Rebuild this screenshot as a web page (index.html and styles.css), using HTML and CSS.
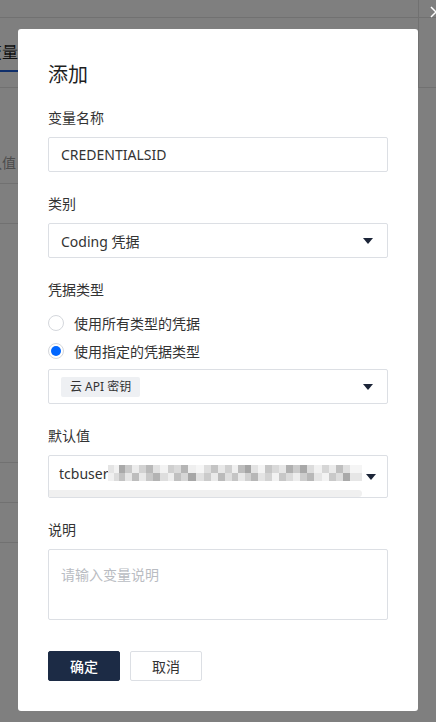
FILE: index.html
```html
<!DOCTYPE html>
<html lang="zh-CN">
<head>
    <meta charset="UTF-8">
    <meta name="viewport" content="width=device-width, initial-scale=1.0">
    <title>添加变量</title>
    <link rel="stylesheet" href="styles.css">
</head>
<body>
    <!-- page behind the mask -->
    <div class="page">
        <div class="page-head">
            <div class="main-head">
                <div class="top-bar"></div>
                <div class="tabs"><span class="tab active">变量</span></div>
            </div>
            <div class="side-head">
                <div class="top-bar"></div>
            </div>
        </div>
        <div class="table">
            <div class="toolbar"></div>
            <div class="row row-head"><span class="col-name">默认值</span></div>
            <div class="row"></div>
            <div class="row row-tall"></div>
            <div class="row"></div>
            <div class="row"></div>
        </div>
    </div>

    <div class="mask"></div>
    <span class="drawer-close">
        <svg width="12" height="12" viewBox="0 0 12 12"><path d="M1 1L11 11M11 1L1 11" stroke="#fff" stroke-width="1.5" fill="none"/></svg>
    </span>

    <div class="dialog-layer">
        <div class="dialog">
            <h2 class="dialog-title">添加</h2>

            <div class="field">
                <div class="field-label">变量名称</div>
                <input class="input" type="text" value="CREDENTIALSID">
            </div>

            <div class="field">
                <div class="field-label">类别</div>
                <div class="input select">
                    <span class="select-value">Coding 凭据</span>
                    <span class="caret"></span>
                </div>
            </div>

            <div class="field">
                <div class="field-label">凭据类型</div>
                <div class="radio-group">
                    <label class="radio"><span class="radio-dot"></span>使用所有类型的凭据</label>
                    <label class="radio checked"><span class="radio-dot"></span>使用指定的凭据类型</label>
                </div>
                <div class="input select select-tags">
                    <span class="tag">云 API 密钥</span>
                    <span class="caret"></span>
                </div>
            </div>

            <div class="field">
                <div class="field-label">默认值</div>
                <div class="input select select-scroll">
                    <div class="scroll-area">
                        <div class="scroll-text">tcbuser<span class="mosaic"></span></div>
                        <div class="scroll-track"></div>
                    </div>
                    <span class="caret-box"><span class="caret"></span></span>
                </div>
            </div>

            <div class="field">
                <div class="field-label">说明</div>
                <textarea class="textarea" placeholder="请输入变量说明"></textarea>
            </div>

            <div class="dialog-footer">
                <button class="btn btn-primary">确定</button>
                <button class="btn">取消</button>
            </div>
        </div>
    </div>
</body>
</html>
```

FILE: styles.css
```css
* {
    box-sizing: border-box;
}
body {
    margin: 0;
    height: 722px;
    overflow: hidden;
    font-family: "Noto Sans", "Noto Sans CJK SC", sans-serif;
    font-size: 14px;
    color: #333;
    background: #fff;
}

/* background page */
.page-head {
    display: flex;
    height: 88px;
    border-bottom: 1px solid #e2e2e2;
}
.main-head {
    width: 419px;
    border-right: 1px solid #e2e2e2;
}
.side-head {
    flex: 1;
}
.top-bar {
    height: 18px;
    border-bottom: 1px solid #e2e2e2;
}
.tabs {
    display: flex;
    padding-top: 22px;
}
.tab {
    margin-left: -14px;
    width: 60px;
    font-size: 16px;
    line-height: 24px;
    padding-bottom: 6px;
    color: #1f1f1f;
}
.tab.active {
    border-bottom: 2px solid #1e5ed6;
}
.table {
    width: 418px;
}
.toolbar {
    height: 52px;
}
.row {
    height: 40px;
    border-bottom: 1px solid #e2e2e2;
    display: flex;
    align-items: center;
}
.row-head {
    height: 44px;
}
.row-tall {
    height: 239px;
}
.col-name {
    margin-left: -26px;
    color: #999;
}

.mask {
    position: fixed;
    inset: 0;
    background: rgba(0, 0, 0, 0.5);
}
.drawer-close {
    position: fixed;
    top: 6px;
    right: -6px;
    display: flex;
}

/* dialog */
.dialog-layer {
    position: fixed;
    inset: 0;
    display: flex;
    justify-content: center;
    align-items: flex-start;
    padding-top: 29px;
}
.dialog {
    width: 400px;
    background: #fff;
    border-radius: 3px;
    padding: 32px 30px 30px;
}
.dialog-title {
    margin: 0 0 18px;
    font-size: 20px;
    line-height: 28px;
    font-weight: 400;
    color: #1f1f1f;
}
.field {
    margin-bottom: 21px;
}
.field:last-of-type {
    margin-bottom: 0;
}
.field-label {
    line-height: 22px;
    margin-bottom: 8px;
    color: #333;
}
.input {
    display: flex;
    align-items: center;
    width: 100%;
    height: 35px;
    padding: 0 12px;
    border: 1px solid #dcdfe4;
    border-radius: 2px;
    background: #fff;
    font: inherit;
    color: #333;
    outline: none;
}
.select {
    justify-content: space-between;
    padding-right: 14px;
}
.caret {
    width: 0;
    height: 0;
    border-left: 5px solid transparent;
    border-right: 5px solid transparent;
    border-top: 6px solid #1c2538;
}
.select-tags {
    margin-top: 4px;
}
.tag {
    height: 20px;
    line-height: 20px;
    padding: 0 9px;
    font-size: 12px;
    background: #eef0f3;
    border-radius: 2px;
    color: #333;
}

.radio-group {
    display: flex;
    flex-direction: column;
}
.radio {
    display: flex;
    align-items: center;
    gap: 10px;
    height: 28px;
    color: #333;
}
.radio-dot {
    width: 16px;
    height: 16px;
    border: 1px solid #d4d7dc;
    border-radius: 50%;
    display: flex;
    align-items: center;
    justify-content: center;
}
.radio.checked .radio-dot::after {
    content: "";
    width: 10px;
    height: 10px;
    border-radius: 50%;
    background: #0066ff;
}

.select-scroll {
    height: 43px;
    padding: 0;
    align-items: stretch;
    overflow: hidden;
}
.scroll-area {
    flex: 1;
    min-width: 0;
    display: flex;
    flex-direction: column;
}
.scroll-text {
    height: 34px;
    display: flex;
    align-items: center;
    padding-left: 10px;
    white-space: nowrap;
    overflow: hidden;
}
.mosaic {
    flex: none;
    width: 260px;
    height: 16px;
    background:
        linear-gradient(90deg, #e4e4e4 0 6px, #f2f2f2 6px 11px, #a9a9a9 11px 17px, #c9c9c9 17px 24px, #ececec 24px 31px, #d2d2d2 31px 38px, #b9b9b9 38px 45px, #e2e2e2 45px 52px, #f3f3f3 52px 60px, #cfcfcf 60px 66px, #dadada 66px 73px, #b5b5b5 73px 80px, #efefef 80px 88px, #f6f6f6 88px 96px, #dedede 96px 103px, #c4c4c4 103px 110px, #e8e8e8 110px 117px, #d0d0d0 117px 124px, #f0f0f0 124px 130px, #bdbdbd 130px 137px, #a5a5a5 137px 143px, #e3e3e3 143px 150px, #f4f4f4 150px 157px, #c6c6c6 157px 164px, #d9d9d9 164px 171px, #e7e7e7 171px 178px, #b0b0b0 178px 185px, #cbcbcb 185px 192px, #a8a8a8 192px 199px, #dcdcdc 199px 206px, #f1f1f1 206px 214px, #d6d6d6 214px 221px, #ebebeb 221px 228px, #bfbfbf 228px 235px, #e0e0e0 235px 242px, #f5f5f5 242px 260px) top / 100% 50% no-repeat,
        linear-gradient(90deg, #f0f0f0 0 6px, #dcdcdc 6px 11px, #c2c2c2 11px 17px, #e6e6e6 17px 24px, #bdbdbd 24px 31px, #e9e9e9 31px 38px, #c8c8c8 38px 45px, #b3b3b3 45px 52px, #dedede 52px 60px, #eeeeee 60px 66px, #c0c0c0 66px 73px, #d6d6d6 73px 80px, #a7a7a7 80px 88px, #e1e1e1 88px 96px, #cbcbcb 96px 103px, #eaeaea 103px 110px, #bbbbbb 110px 117px, #dfdfdf 117px 124px, #c5c5c5 124px 130px, #e8e8e8 130px 137px, #d1d1d1 137px 143px, #b7b7b7 143px 150px, #e4e4e4 150px 157px, #d3d3d3 157px 164px, #f2f2f2 164px 171px, #c7c7c7 171px 178px, #dbdbdb 178px 185px, #ededed 185px 192px, #cdcdcd 192px 199px, #b8b8b8 199px 206px, #e5e5e5 206px 214px, #f3f3f3 214px 221px, #c9c9c9 221px 228px, #dddddd 228px 235px, #a9a9a9 235px 242px, #e6e6e6 242px 260px) bottom / 100% 50% no-repeat;
}
.scroll-track {
    height: 7px;
    margin-top: auto;
    background: #f0f0f0;
    border-radius: 0 4px 4px 0;
}
.caret-box {
    flex: none;
    width: 25px;
    display: flex;
    align-items: center;
    padding-left: 4px;
}

.textarea {
    display: block;
    width: 100%;
    height: 71px;
    padding: 14px 12px;
    border: 1px solid #dcdfe4;
    border-radius: 2px;
    font: inherit;
    line-height: 22px;
    color: #333;
    resize: none;
    outline: none;
}
.textarea::placeholder {
    color: #b9bcc2;
}

.dialog-footer {
    display: flex;
    gap: 10px;
    margin-top: 31px;
}
.btn {
    width: 72px;
    height: 30px;
    border: 1px solid #dcdfe4;
    border-radius: 2px;
    background: #fff;
    font: inherit;
    color: #333;
    cursor: pointer;
}
.btn-primary {
    background: #1c2b45;
    border-color: #1c2b45;
    color: #fff;
    font-weight: 500;
}
```
